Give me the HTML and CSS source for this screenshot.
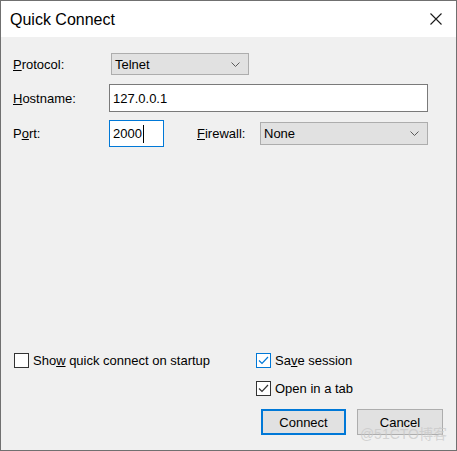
FILE: index.html
```html
<!DOCTYPE html>
<html>
<head>
<meta charset="utf-8">
<link rel="stylesheet" href="styles.css">
</head>
<body>
<div class="window">
  <div class="titlebar">
    <span class="title">Quick Connect</span>
    <svg class="close" width="12" height="12" viewBox="0 0 12 12"><path d="M0.5 0.5 L11.5 11.5 M11.5 0.5 L0.5 11.5" stroke="#1a1a1a" stroke-width="1.1" fill="none"/></svg>
  </div>
  <div class="content">
    <div class="row row-protocol">
      <label class="lbl lbl-protocol"><u>P</u>rotocol:</label>
      <div class="select select-protocol"><span>Telnet</span>
        <svg class="chev" width="9" height="5" viewBox="0 0 9 5"><path d="M0.5 0.5 L4.5 4.5 L8.5 0.5" stroke="#5a5a5a" fill="none" stroke-width="1"/></svg>
      </div>
    </div>
    <div class="row row-host">
      <label class="lbl lbl-host"><u>H</u>ostname:</label>
      <div class="input input-host">127.0.0.1</div>
    </div>
    <div class="row row-port">
      <label class="lbl lbl-host">P<u>o</u>rt:</label>
      <div class="input input-port">2000<span class="caret"></span></div>
      <label class="lbl lbl-fw"><u>F</u>irewall:</label>
      <div class="select select-fw"><span>None</span>
        <svg class="chev" width="9" height="5" viewBox="0 0 9 5"><path d="M0.5 0.5 L4.5 4.5 L8.5 0.5" stroke="#5a5a5a" fill="none" stroke-width="1"/></svg>
      </div>
    </div>
    <div class="bottom">
      <div class="check"><span class="box"></span><span>Sho<u>w</u> quick connect on startup</span></div>
      <div class="check"><span class="box box-focus"><svg width="13" height="13" viewBox="0 0 13 13"><path d="M2 6.5 L5 9.5 L11 3" stroke="#0078d7" stroke-width="1.2" fill="none"/></svg></span><span>Sa<u>v</u>e session</span></div>
      <div></div>
      <div class="check"><span class="box"><svg width="13" height="13" viewBox="0 0 13 13"><path d="M2 6.5 L5 9.5 L11 3" stroke="#333333" stroke-width="1.2" fill="none"/></svg></span><span>Open in a tab</span></div>
      <div class="buttons">
        <div class="btn btn-default">Connect</div>
        <div class="btn">Cancel</div>
      </div>
    </div>
  </div>
  <div class="watermark">@51CTO博客</div>
</div>
</body>
</html>
```
FILE: styles.css
```css
html, body {
  margin: 0;
  padding: 0;
}
body {
  font-family: "Liberation Sans", Arial, sans-serif;
  font-size: 13px;
  color: #000;
}
.window {
  position: relative;
  width: 457px;
  height: 451px;
  box-sizing: border-box;
  border: 1px solid #707070;
  display: flex;
  flex-direction: column;
  background: #f0f0f0;
  overflow: hidden;
}
.titlebar {
  height: 36px;
  background: #fff;
  display: flex;
  align-items: center;
  justify-content: space-between;
  padding: 0 14px 0 9px;
  flex: none;
}
.title {
  font-size: 16px;
  margin-top: 1px;
}
.close {
  display: block;
}
.content {
  flex: 1;
  display: flex;
  flex-direction: column;
  padding: 16px 13px 15px 12px;
}
.row {
  display: flex;
  align-items: center;
}
.row-host {
  margin-top: 9px;
}
.row-port {
  margin-top: 8px;
}
.lbl {
  flex: none;
}
.lbl-protocol {
  width: 98px;
}
.lbl-host {
  width: 96px;
}
.lbl-fw {
  margin-left: 33px;
  width: 63px;
}
.select {
  box-sizing: border-box;
  background: #e1e1e1;
  border: 1px solid #adadad;
  display: flex;
  align-items: center;
  justify-content: space-between;
  padding: 0 8px 0 3px;
}
.select-protocol {
  width: 138px;
  height: 22px;
}
.select-fw {
  width: 168px;
  height: 23px;
}
.chev {
  display: block;
}
.input {
  box-sizing: border-box;
  background: #fff;
  border: 1px solid #7a7a7a;
  display: flex;
  align-items: center;
  padding-left: 3px;
}
.input-host {
  width: 319px;
  height: 28px;
}
.input-port {
  width: 55px;
  height: 27px;
  border-color: #0078d7;
}
.caret {
  display: inline-block;
  width: 0;
  height: 18px;
  border-left: 1px solid #000;
  margin-left: 1px;
}
.bottom {
  margin-top: auto;
  display: grid;
  grid-template-columns: 242px 1fr;
  row-gap: 13px;
  padding-left: 1px;
}
.check {
  display: flex;
  align-items: center;
  height: 15px;
}
.box {
  box-sizing: border-box;
  width: 15px;
  height: 15px;
  border: 1px solid #333;
  background: #fff;
  margin-right: 4px;
  display: flex;
  align-items: center;
  justify-content: center;
  flex: none;
}
.box-focus {
  border-color: #0078d7;
}
.box svg {
  display: block;
}
.buttons {
  grid-column: 1 / 3;
  display: flex;
  justify-content: flex-end;
  gap: 11px;
}
.btn {
  box-sizing: border-box;
  height: 26px;
  width: 86px;
  background: #e1e1e1;
  border: 1px solid #adadad;
  display: flex;
  align-items: center;
  justify-content: center;
}
.btn-default {
  width: 85px;
  border: 2px solid #0078d7;
}
.watermark {
  position: absolute;
  right: 9px;
  bottom: 7px;
  font-family: "Liberation Sans", "Noto Sans CJK SC", sans-serif;
  font-size: 14px;
  color: rgba(200, 200, 200, 0.75);
  pointer-events: none;
}
```
